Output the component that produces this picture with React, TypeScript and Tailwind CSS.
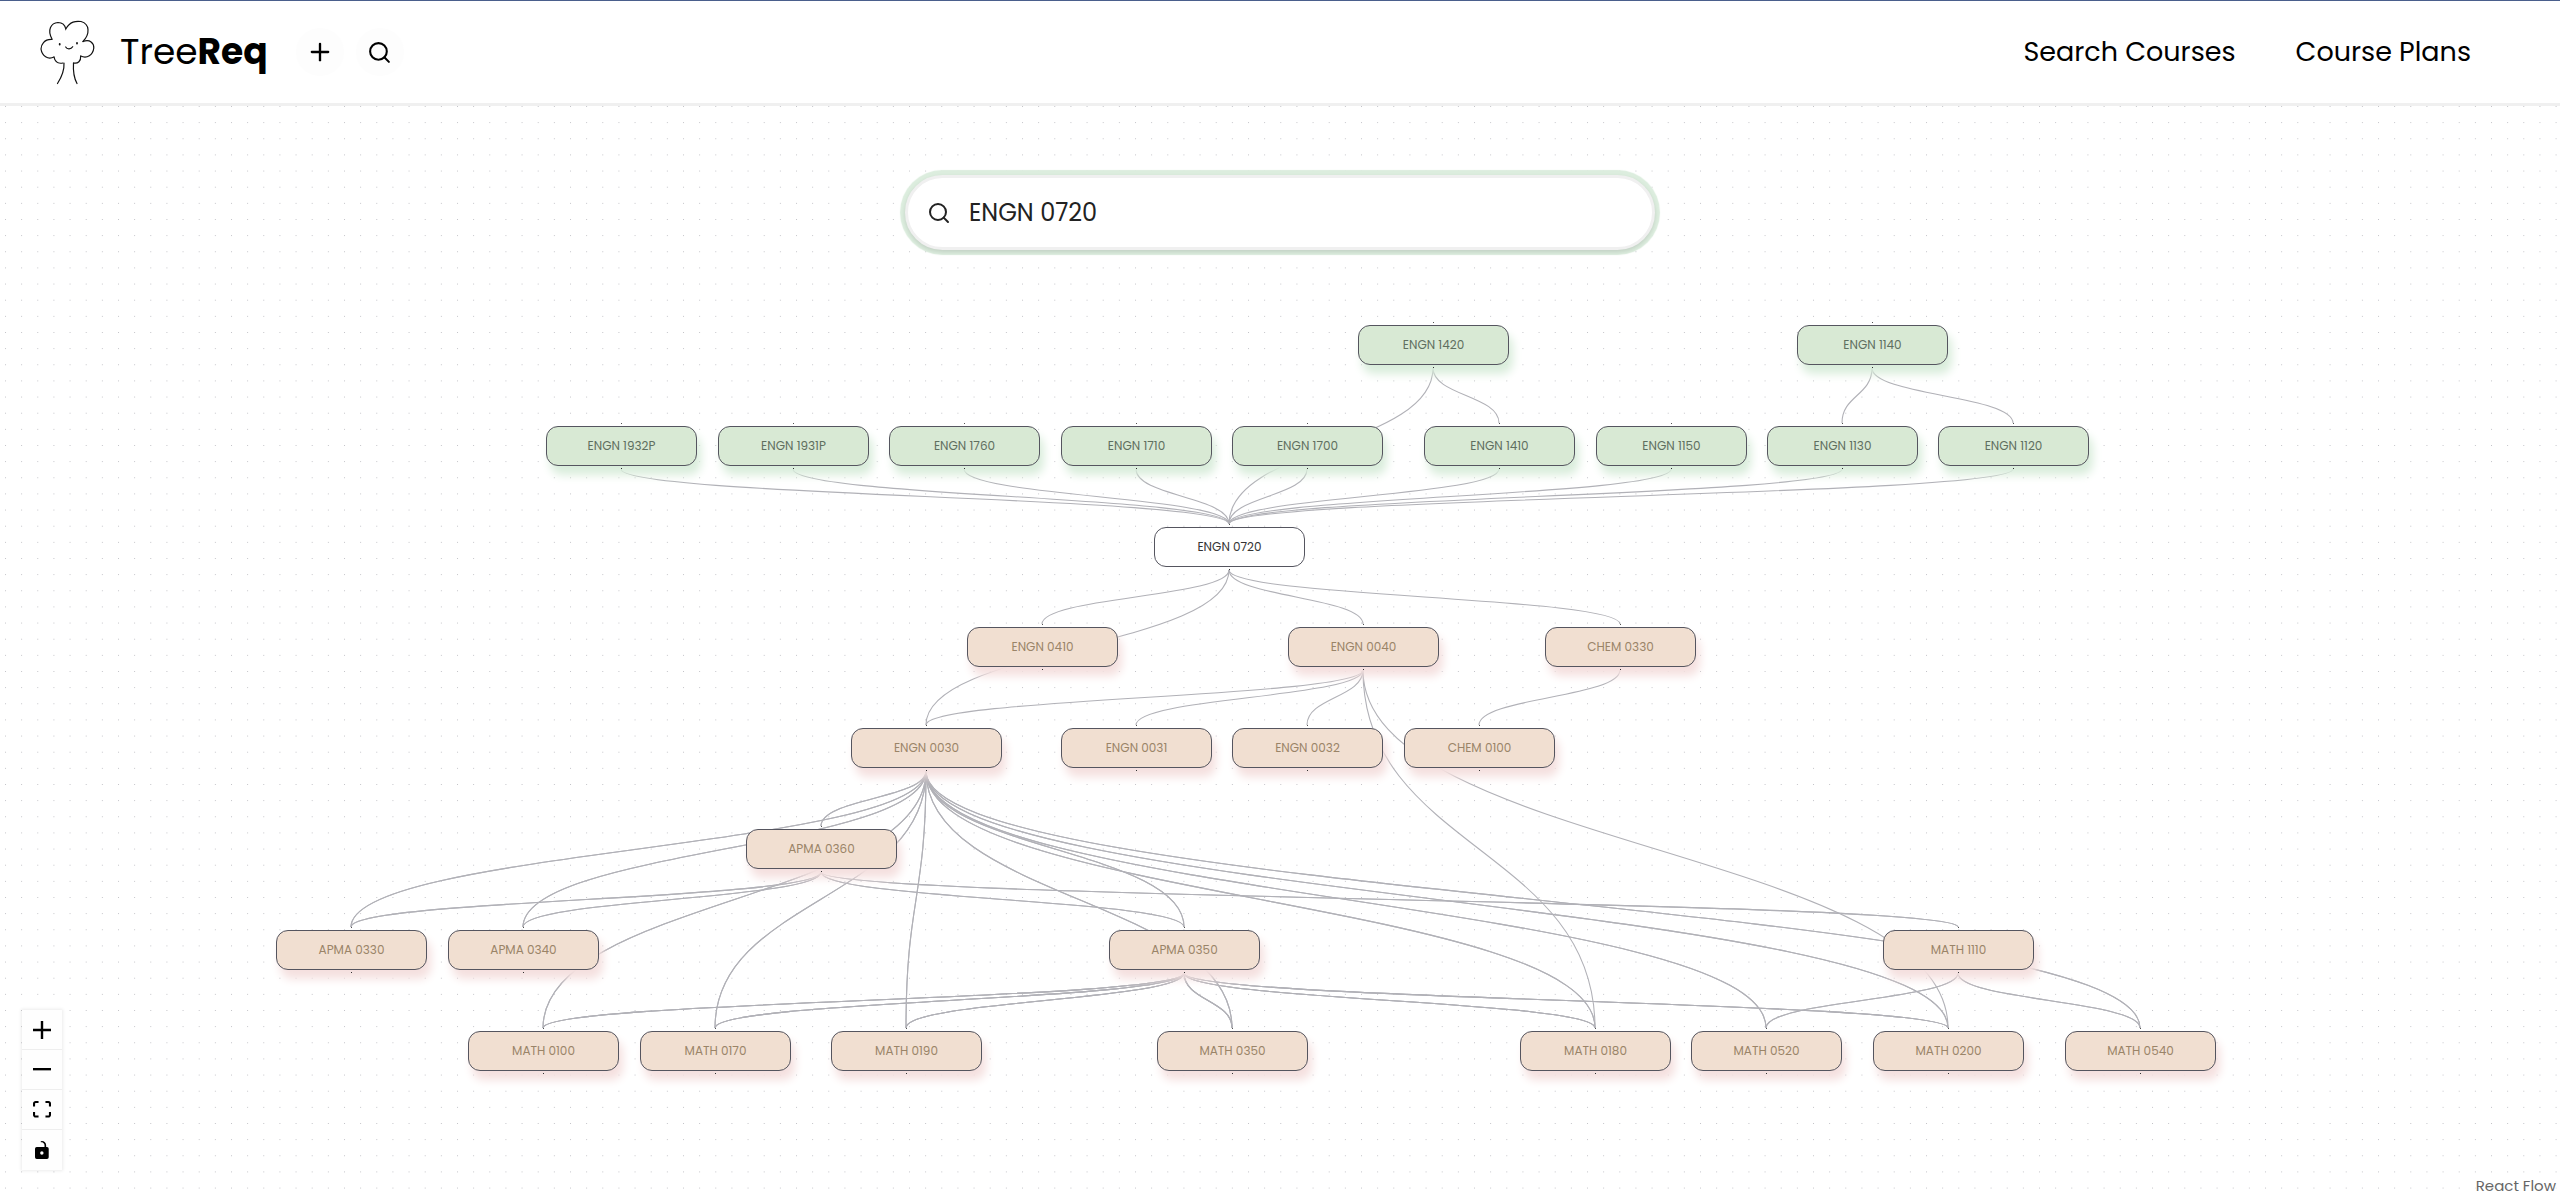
import { useState } from "react"
import { Plus, Search } from "lucide-react"

type Kind = "post" | "root" | "pre"

interface CourseNode {
  id: string
  x: number
  row: number
  kind: Kind
}

// x is measured from the middle of the canvas
const nodes: CourseNode[] = [
  { id: "ENGN 1420", x: 153, row: 0, kind: "post" },
  { id: "ENGN 1140", x: 592, row: 0, kind: "post" },
  { id: "ENGN 1932P", x: -659, row: 1, kind: "post" },
  { id: "ENGN 1931P", x: -487, row: 1, kind: "post" },
  { id: "ENGN 1760", x: -316, row: 1, kind: "post" },
  { id: "ENGN 1710", x: -144, row: 1, kind: "post" },
  { id: "ENGN 1700", x: 27, row: 1, kind: "post" },
  { id: "ENGN 1410", x: 219, row: 1, kind: "post" },
  { id: "ENGN 1150", x: 391, row: 1, kind: "post" },
  { id: "ENGN 1130", x: 562, row: 1, kind: "post" },
  { id: "ENGN 1120", x: 733, row: 1, kind: "post" },
  { id: "ENGN 0720", x: -51, row: 2, kind: "root" },
  { id: "ENGN 0410", x: -238, row: 3, kind: "pre" },
  { id: "ENGN 0040", x: 83, row: 3, kind: "pre" },
  { id: "CHEM 0330", x: 340, row: 3, kind: "pre" },
  { id: "ENGN 0030", x: -354, row: 4, kind: "pre" },
  { id: "ENGN 0031", x: -144, row: 4, kind: "pre" },
  { id: "ENGN 0032", x: 27, row: 4, kind: "pre" },
  { id: "CHEM 0100", x: 199, row: 4, kind: "pre" },
  { id: "APMA 0360", x: -459, row: 5, kind: "pre" },
  { id: "APMA 0330", x: -929, row: 6, kind: "pre" },
  { id: "APMA 0340", x: -757, row: 6, kind: "pre" },
  { id: "APMA 0350", x: -96, row: 6, kind: "pre" },
  { id: "MATH 1110", x: 678, row: 6, kind: "pre" },
  { id: "MATH 0100", x: -737, row: 7, kind: "pre" },
  { id: "MATH 0170", x: -565, row: 7, kind: "pre" },
  { id: "MATH 0190", x: -374, row: 7, kind: "pre" },
  { id: "MATH 0350", x: -48, row: 7, kind: "pre" },
  { id: "MATH 0180", x: 315, row: 7, kind: "pre" },
  { id: "MATH 0520", x: 486, row: 7, kind: "pre" },
  { id: "MATH 0200", x: 668, row: 7, kind: "pre" },
  { id: "MATH 0540", x: 860, row: 7, kind: "pre" },
]

// source -> targets, with how many prerequisite groups share the edge
const edges: { from: string; to: string[]; times: number }[] = [
  { from: "ENGN 1420", to: ["ENGN 0720", "ENGN 1410"], times: 1 },
  { from: "ENGN 1140", to: ["ENGN 1130", "ENGN 1120"], times: 1 },
  { from: "ENGN 1932P", to: ["ENGN 0720"], times: 1 },
  { from: "ENGN 1931P", to: ["ENGN 0720"], times: 1 },
  { from: "ENGN 1760", to: ["ENGN 0720"], times: 1 },
  { from: "ENGN 1710", to: ["ENGN 0720"], times: 1 },
  { from: "ENGN 1700", to: ["ENGN 0720"], times: 1 },
  { from: "ENGN 1410", to: ["ENGN 0720"], times: 1 },
  { from: "ENGN 1150", to: ["ENGN 0720"], times: 1 },
  { from: "ENGN 1130", to: ["ENGN 0720"], times: 1 },
  { from: "ENGN 1120", to: ["ENGN 0720"], times: 1 },
  { from: "ENGN 0720", to: ["ENGN 0410", "ENGN 0040", "CHEM 0330", "ENGN 0030"], times: 1 },
  { from: "ENGN 0040", to: ["ENGN 0030", "ENGN 0031", "ENGN 0032", "MATH 0180", "MATH 0200"], times: 1 },
  { from: "CHEM 0330", to: ["CHEM 0100"], times: 1 },
  {
    from: "ENGN 0030",
    to: [
      "APMA 0360", "APMA 0330", "APMA 0340", "APMA 0350", "MATH 0100", "MATH 0170",
      "MATH 0190", "MATH 0350", "MATH 0180", "MATH 0520", "MATH 0200", "MATH 0540",
    ],
    times: 2,
  },
  { from: "APMA 0360", to: ["APMA 0330", "APMA 0340", "APMA 0350", "MATH 1110"], times: 2 },
  {
    from: "APMA 0350",
    to: ["MATH 0100", "MATH 0170", "MATH 0190", "MATH 0350", "MATH 0180", "MATH 0200"],
    times: 3,
  },
  { from: "MATH 1110", to: ["MATH 0520", "MATH 0540"], times: 2 },
]

const NODE_HEIGHT = 40
const HANDLE_GAP = 3
const rowTops = [219, 320, 421, 521, 622, 723, 824, 925]

const edgePath = (from: string, to: string) => {
  const s = nodes.find((n) => n.id === from)!
  const t = nodes.find((n) => n.id === to)!
  const sy = rowTops[s.row] + NODE_HEIGHT + HANDLE_GAP
  const ty = rowTops[t.row] - HANDLE_GAP
  const mid = (sy + ty) / 2
  return `M${s.x},${sy} C${s.x},${mid} ${t.x},${mid} ${t.x},${ty}`
}

const nodeStyles: Record<Kind, string> = {
  post: "bg-[#d8e9d4] text-[#5f6f5f] shadow-[4px_9px_10px_#d9eddb]",
  root: "bg-white text-[#333333]",
  pre: "bg-[#f1dfd1] text-[#9a8468] shadow-[4px_9px_10px_#f5e0df]",
}

function TreeLogo() {
  return (
    <svg viewBox="0 0 80 80" className="mb-1 size-20 shrink-0" fill="none" stroke="#111" strokeWidth="1.2" strokeLinecap="round">
      <path d="M22 29 C17 20 21 13 28 12.500 C32 12.500 35 15 35.800 19 C40 11 46 11 51 11.500 C60 14 60 24 53 31.500" />
      <path d="M22 29.500 C14 29 11 35 11 39 C12 46 18 50 24 47" />
      <path d="M53 31.500 C60 29 64 33 63.800 38 C63 45 57 49 50.700 46" />
      <path d="M24 47 C25 52 28 54 33 53" />
      <path d="M50.700 46 C51 51 48 54 43.500 53" />
      <path d="M34 53 C34.500 61 31 68 27.500 73.500" />
      <path d="M43.500 53 C43 61 44 68 47 73.500" />
      <path d="M35.700 37 C37 39.500 41 39.500 42.700 36.700" />
      <path d="M29.700 34 V34.600 M47 33 V33.600" strokeWidth="1.800" />
    </svg>
  )
}

function Header() {
  return (
    <header className="flex h-[106px] items-center justify-between border-t border-b-3 border-t-[#4a5f8c] border-b-[#f0f0f0] bg-white pl-[30px] pr-[89px]">
      <div className="flex items-center">
        <a href="#" className="flex items-center gap-[10px] text-[36px] leading-[48px] text-black">
          <TreeLogo />
          <span>
            Tree<b className="font-bold">Req</b>
          </span>
        </a>
        <div className="ml-7 flex gap-3">
          <button aria-label="Add course" className="flex size-12 items-center justify-center rounded-full bg-[#fdfdfd]">
            <Plus size={28} strokeWidth={2} />
          </button>
          <button aria-label="Search" className="flex size-12 items-center justify-center rounded-full bg-[#fdfdfd]">
            <Search size={25} strokeWidth={2} />
          </button>
        </div>
      </div>
      <nav className="flex items-center gap-[60px] text-[27px] leading-10 text-black">
        <a href="#">Search Courses</a>
        <a href="#">Course Plans</a>
      </nav>
    </header>
  )
}

function SearchBox() {
  const [query, setQuery] = useState("ENGN 0720")

  return (
    <label className="relative z-10 mx-auto mt-[69px] flex h-[75px] w-[750px] max-w-[90%] items-center gap-[18px] rounded-full border-3 border-[#f0f0f0] bg-white pl-[19px] pr-8 shadow-[0_2px_4px_rgba(0,0,0,0.12),0_0_1px_5px_#dcedde]">
      <Search size={24} strokeWidth={2} className="shrink-0 text-[#222222]" />
      <input
        type="text"
        aria-label="Search for a course"
        value={query}
        onChange={(e) => setQuery(e.target.value)}
        className="min-w-0 flex-1 bg-transparent text-[24px] leading-8 text-[#222222] outline-none"
      />
    </label>
  )
}

function Controls() {
  return (
    <div className="absolute bottom-[28px] left-[22px] z-10 flex flex-col bg-[#fefefe] shadow-[0_0_3px_1px_rgba(0,0,0,0.08)]">
      <button aria-label="Zoom in" className="flex h-10 w-10 items-center justify-center border-b border-[#eeeeee]">
        <svg viewBox="0 0 32 32" className="size-[18px]">
          <path d="M32 18.133H18.133V32h-4.266V18.133H0v-4.266h13.867V0h4.266v13.867H32z" />
        </svg>
      </button>
      <button aria-label="Zoom out" className="flex h-10 w-10 items-center justify-center border-b border-[#eeeeee]">
        <svg viewBox="0 0 32 5" className="w-[18px]">
          <path d="M0 0h32v4.200H0z" />
        </svg>
      </button>
      <button aria-label="Fit view" className="flex h-10 w-10 items-center justify-center border-b border-[#eeeeee]">
        <svg viewBox="0 0 32 30" className="w-[18px]">
          <path d="M3.692 4.630c0-.530.400-.938.939-.938h5.215V0H4.708C2.130 0 0 2.054 0 4.630v5.216h3.692V4.630zM27.354 0h-5.200v3.692h5.170c.530 0 .984.400.984.939v5.215H32V4.631A4.624 4.624 0 0027.354 0zm.954 24.830c0 .532-.400.940-.939.940h-5.215v3.768h5.215c2.577 0 4.631-2.130 4.631-4.707v-5.139h-3.692v5.139zm-23.677.940c-.531 0-.939-.400-.939-.940v-5.138H0v5.139c0 2.577 2.130 4.707 4.708 4.707h5.138V25.770H4.631z" />
        </svg>
      </button>
      <button aria-label="Toggle interactivity" className="flex h-10 w-10 items-center justify-center">
        <svg viewBox="0 0 25 32" className="h-[18px]">
          <path d="M21.333 10.667H19.810V7.619C19.810 3.429 16.380 0 12.190 0c-4.114 1.828-1.370 2.133.305 2.438 1.676.305 4.420 2.590 4.420 5.181v3.048H3.047A3.056 3.056 0 000 13.714v15.238A3.056 3.056 0 003.048 32h18.285a3.056 3.056 0 003.048-3.048V13.714a3.056 3.056 0 00-3.048-3.047zM12.190 24.533a3.056 3.056 0 01-3.047-3.047 3.056 3.056 0 013.047-3.048 3.056 3.056 0 013.048 3.048 3.056 3.056 0 01-3.048 3.047z" />
        </svg>
      </button>
    </div>
  )
}

function Graph() {
  return (
    <>
      <svg className="absolute inset-0 size-full">
        <pattern id="dots" x="5" y="0" width="16.143" height="16.143" patternUnits="userSpaceOnUse">
          <circle cx="0.5" cy="0.5" r="0.5" fill="#91919a" fillOpacity="0.7" />
        </pattern>
        <rect width="100%" height="100%" fill="url(#dots)" />
      </svg>
      <div className="absolute left-1/2 top-0">
        <svg width="1" height="1" className="absolute overflow-visible" fill="none" stroke="#b1b1b7" strokeWidth="1.1">
          {edges.flatMap((edge) =>
            edge.to.flatMap((to) =>
              Array.from({ length: edge.times }, (_, i) => (
                <path key={`${edge.from}-${to}-${i}`} d={edgePath(edge.from, to)} />
              ))
            )
          )}
        </svg>
        {nodes.map((node) => (
          <div
            key={node.id}
            className={`absolute -ml-[75px] flex h-10 w-[151px] items-center justify-center rounded-xl border border-[#55555f] text-[12px] leading-4 ${nodeStyles[node.kind]}`}
            style={{ left: node.x, top: rowTops[node.row] }}
          >
            <span className="absolute -top-1 left-[74px] size-px bg-[#555555]" />
            {node.id}
            <span className="absolute -bottom-1 left-[74px] size-px bg-[#333333]" />
          </div>
        ))}
      </div>
    </>
  )
}

export default function App() {
  return (
    <div className="flex min-h-screen flex-col bg-white font-['Poppins','Open_Sans',sans-serif]">
      <Header />
      <main className="relative flow-root min-h-[1092px] flex-1 overflow-hidden">
        <Graph />
        <SearchBox />
        <Controls />
        <a href="#" className="absolute bottom-0 right-0 bg-white/50 px-1 text-[15px] leading-6 text-[#666666]">
          React Flow
        </a>
      </main>
    </div>
  )
}
